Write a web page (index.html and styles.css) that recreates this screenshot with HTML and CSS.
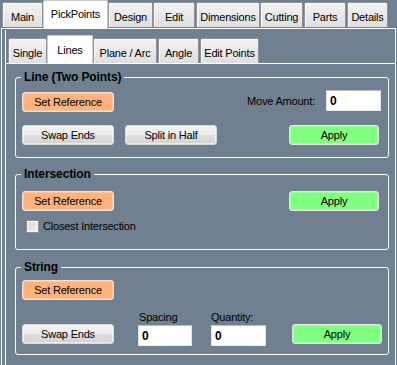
FILE: index.html
```html
<!DOCTYPE html>
<html>
<head>
<meta charset="utf-8">
<link rel="stylesheet" href="styles.css">
</head>
<body>
<div class="tabctl">
  <div class="strip outer">
    <div class="tab w-main">Main</div>
    <div class="tab sel w-pick">PickPoints</div>
    <div class="tab w-design">Design</div>
    <div class="tab w-edit">Edit</div>
    <div class="tab w-dim">Dimensions</div>
    <div class="tab w-cut">Cutting</div>
    <div class="tab w-parts">Parts</div>
    <div class="tab w-details">Details</div>
  </div>
  <div class="page">
    <div class="subctl">
      <div class="strip inner">
        <div class="tab w-single">Single</div>
        <div class="tab sel w-lines">Lines</div>
        <div class="tab w-plane">Plane / Arc</div>
        <div class="tab w-angle">Angle</div>
        <div class="tab w-editpts">Edit Points</div>
      </div>
      <div class="subpage">
        <section class="group g-line">
          <div class="legend">Line (Two Points)</div>
          <div class="row r-top">
            <button class="btn ref">Set Reference</button>
            <span class="lbl move">Move Amount:</span>
            <input class="input in-move" type="text" value="0">
          </div>
          <div class="row r-actions">
            <button class="btn">Swap Ends</button>
            <button class="btn split">Split in Half</button>
            <button class="btn apply ap1">Apply</button>
          </div>
        </section>

        <section class="group g-inter">
          <div class="legend">Intersection</div>
          <div class="row r-ref">
            <button class="btn ref">Set Reference</button>
            <button class="btn apply ap2">Apply</button>
          </div>
          <div class="row r-check">
            <span class="checkbox"></span>
            <span class="lbl">Closest Intersection</span>
          </div>
        </section>

        <section class="group g-string">
          <div class="legend">String</div>
          <div class="row r-ref3">
            <button class="btn ref">Set Reference</button>
          </div>
          <div class="row r-bottom">
            <button class="btn swap3">Swap Ends</button>
            <div class="field f-spacing">
              <span class="lbl flbl">Spacing</span>
              <input class="input in-spacing" type="text" value="0">
            </div>
            <div class="field f-qty">
              <span class="lbl flbl">Quantity:</span>
              <input class="input in-qty" type="text" value="0">
            </div>
            <button class="btn apply ap3">Apply</button>
          </div>
        </section>
      </div>
    </div>
  </div>
</div>
</body>
</html>
```

FILE: styles.css
```css
html, body {
  margin: 0;
  padding: 0;
}
body {
  width: 397px;
  height: 365px;
  overflow: hidden;
  background: #708090;
  font-family: "Liberation Sans", Arial, sans-serif;
  font-size: 11px;
  letter-spacing: -0.2px;
  color: #000;
}

/* ---------- tab strips ---------- */
.strip {
  display: flex;
  align-items: flex-end;
}
.strip.outer {
  height: 28px;
  padding-left: 2px;
}
.strip.inner {
  height: 33px;
  padding-left: 1px;
}
.tab {
  box-sizing: border-box;
  height: 25px;
  display: flex;
  align-items: center;
  justify-content: center;
  padding-top: 3px;
  border: 1px solid #8e939b;
  border-bottom: none;
  border-radius: 2px 2px 0 0;
  background: linear-gradient(#f3f3f3, #e9e9e9 50%, #dedede);
  box-shadow: inset 1px 1px 0 #fbfbfb;
  white-space: nowrap;
}
.outer .tab {
  margin-bottom: 1px;
}
.tab.sel {
  position: relative;
  z-index: 1;
  height: 29px;
  margin-bottom: -1px;
  background: #fff;
  border-color: #cfcfcf;
  box-shadow: none;
}
.outer .tab.sel {
  padding: 0 0 3px;
}
.inner .tab.sel {
  padding: 0;
}

.w-main { width: 41px; }
.w-pick { width: 65px; }
.w-design { width: 45px; }
.w-edit { width: 42px; }
.w-dim { width: 64px; margin-left: 1px; }
.w-cut { width: 43px; }
.w-parts { width: 42px; margin-left: 1px; }
.w-details { width: 41px; margin-left: 1px; }

.w-single { width: 39px; margin-left: 1px; }
.w-lines { width: 46px; }
.w-plane { width: 64px; }
.w-angle { width: 41px; margin-left: 1px; }
.w-editpts { width: 59px; margin-left: 1px; }

/* ---------- pages ---------- */
.page {
  box-sizing: border-box;
  margin-left: 1px;
  width: 395px;
  height: 337px;
  border: 1px solid #fff;
  border-bottom: none;
  padding: 1px 0 0 3px;
}
.subctl {
  box-sizing: border-box;
  height: 100%;
  border-left: 1px solid #fff;
}
.subpage {
  border-top: 1px solid #fff;
  padding-top: 13px;
}

/* ---------- group boxes ---------- */
.group {
  box-sizing: border-box;
  width: 374px;
  margin-left: 9px;
  border: 1px solid #fff;
  border-radius: 3px;
  padding: 0 0 0 6px;
}
.g-line { padding-bottom: 12px; }
.g-inter { margin-top: 16px; padding-bottom: 16px; }
.g-string { margin-top: 17px; padding-bottom: 8px; }

.legend {
  width: fit-content;
  margin: -7px 0 0 -1px;
  padding: 0 3px;
  background: #708090;
  font-size: 12px;
  font-weight: bold;
  line-height: 13px;
  letter-spacing: -0.1px;
}

.row {
  display: flex;
  align-items: center;
}
.r-top {
  margin-top: 6px;
  align-items: flex-start;
}
.r-top .ref { margin-top: 2px; }
.r-top .move {
  align-self: center;
  margin-left: auto;
}
.r-actions { margin-top: 13px; }
.r-ref { margin-top: 10px; }
.r-check { margin-top: 9px; }
.r-ref3 { margin-top: 6px; }
.r-bottom {
  margin-top: 11px;
  align-items: flex-end;
}

.lbl {
  line-height: 13px;
  white-space: nowrap;
}

/* ---------- buttons ---------- */
.btn {
  box-sizing: border-box;
  width: 92px;
  height: 20px;
  margin: 0;
  padding: 0;
  font-family: inherit;
  font-size: 11px;
  letter-spacing: -0.2px;
  color: #000;
  border: 1px solid #d9d9d9;
  border-radius: 3px;
  background: linear-gradient(#f3f3f3, #ebebeb 48%, #dddddd 52%, #d3d3d3);
  box-shadow: inset 0 0 0 1px rgba(255, 255, 255, 0.55);
}
.btn.ref {
  background: #ffb27c;
  border-color: #ece2d9;
  box-shadow: inset 0 0 0 1px rgba(255, 255, 255, 0.25);
}
.btn.apply {
  width: 90px;
  background: #80ff80;
  border-color: #e4e4e4;
  box-shadow: inset 0 0 0 1px rgba(255, 255, 255, 0.25);
}
.split { margin-left: 11px; }
.ap1 { margin-left: auto; margin-right: 9px; }
.ap2 { margin-left: auto; margin-right: 9px; }
.ap3 { width: 89px; margin-left: 26px; margin-bottom: 2px; }
.swap3 { margin-bottom: 2px; }

/* ---------- inputs ---------- */
.input {
  box-sizing: border-box;
  height: 21px;
  margin: 0;
  padding: 0 0 0 3px;
  background: #fff;
  border: 1px solid;
  border-color: #b9bcc2 #dfe3e9 #e3e9ef #dfe1e7;
  font-family: inherit;
  font-size: 12px;
  font-weight: bold;
  letter-spacing: 0;
  color: #000;
  outline: none;
}
.in-move {
  width: 55px;
  margin-left: 11px;
  margin-right: 7px;
}
.in-spacing { width: 54px; }
.in-qty { width: 55px; }

.field {
  display: flex;
  flex-direction: column;
}
.flbl { margin-bottom: 1px; padding-left: 1px; }
.f-spacing { margin-left: 24px; }
.f-qty { margin-left: 19px; }
.f-qty .flbl { padding-left: 0; }

/* ---------- checkbox ---------- */
.checkbox {
  box-sizing: border-box;
  width: 13px;
  height: 13px;
  margin-left: 4px;
  margin-right: 4px;
  border: 1px solid #8e8f8f;
  background: linear-gradient(135deg, #d8d8d8, #f2f2f2);
  box-shadow: inset 0 0 0 1px #f6f6f6;
}
```
